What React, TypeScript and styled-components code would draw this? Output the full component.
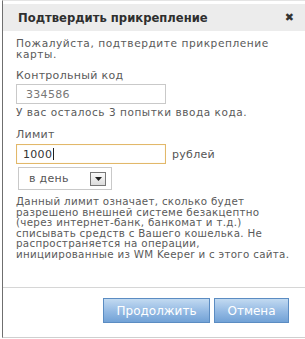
import React from "react";
import styled, { createGlobalStyle } from "styled-components";

const Global = createGlobalStyle`
  html, body { margin: 0; padding: 0; background: #fff; }
  body { font-family: "DejaVu Sans", Verdana, sans-serif; }
`;

const Dialog = styled.div`
  box-sizing: border-box;
  width: 303px;
  height: 338px;
  margin-left: 2px;
  border-left: 1px solid #6f6f6f;
  border-top: 1px solid #e4e4e4;
  border-bottom: 1px solid #cfcfcf;
  display: flex;
  flex-direction: column;
`;

const Header = styled.div`
  margin-top: 3px;
  height: 27px;
  flex-shrink: 0;
  background: #ececec;
  display: flex;
  align-items: center;
  justify-content: space-between;
  padding: 0 11px 0 15px;
`;

const Title = styled.div`
  font-size: 11.6px;
  font-weight: bold;
  color: #2f2f2f;
`;

const Close = styled.span`
  font-size: 11px;
  font-weight: bold;
  color: #333;
`;

const Body = styled.div`
  padding: 7px 10px 0 13px;
  color: #5a5a5a;
  flex: 1;
`;

const Para = styled.p<{ $top?: number; $size?: number; $lh?: number; $ls?: number }>`
  margin: ${(p) => p.$top ?? 0}px 0 0 0;
  font-size: ${(p) => p.$size ?? 10.6}px;
  line-height: ${(p) => p.$lh ?? 11}px;
  letter-spacing: ${(p) => p.$ls ?? 0.55}px;
`;

const Label = styled.div<{ $top: number }>`
  margin-top: ${(p) => p.$top}px;
  font-size: 11px;
  letter-spacing: 0.3px;
  line-height: 12px;
`;

const Row = styled.div<{ $top: number }>`
  margin-top: ${(p) => p.$top}px;
  display: flex;
  align-items: center;
  gap: 6px;
`;

const Input = styled.div<{ $focus?: boolean }>`
  box-sizing: border-box;
  width: 150px;
  height: 20px;
  border: 1px solid ${(p) => (p.$focus ? "#e2b86a" : "#c9c9c9")};
  box-shadow: ${(p) => (p.$focus ? "inset 0 0 1px #f0d9a8" : "none")};
  background: #fff;
  display: flex;
  align-items: center;
  padding-left: ${(p) => (p.$focus ? 6 : 9)}px;
  font-size: 11px;
  letter-spacing: 0.3px;
  color: ${(p) => (p.$focus ? "#333" : "#777")};
`;

const Caret = styled.span`
  display: inline-block;
  width: 1px;
  height: 12px;
  background: #222;
  margin-left: 1px;
`;

const Unit = styled.span`
  font-size: 11px;
  letter-spacing: 0.3px;
  color: #555;
`;

const Select = styled.div`
  box-sizing: border-box;
  margin: 3px 0 0 2px;
  width: 94px;
  height: 23px;
  border: 1px solid #c9c9c9;
  display: flex;
  align-items: center;
  justify-content: space-between;
  padding: 0 5px 0 10px;
  font-size: 11px;
  letter-spacing: 0.3px;
  color: #555;
`;

const Arrow = styled.span`
  box-sizing: border-box;
  width: 16px;
  height: 14px;
  border: 1px solid #777;
  background: linear-gradient(#fafafa, #dcdcdc);
  display: flex;
  align-items: center;
  justify-content: center;
`;

const Footer = styled.div`
  border-top: 1px solid #d6d6d6;
  flex-shrink: 0;
  display: flex;
  justify-content: flex-end;
  gap: 4px;
  padding: 10px 16px 14px 0;
`;

const Button = styled.button<{ $w: number }>`
  box-sizing: border-box;
  width: ${(p) => p.$w}px;
  height: 25px;
  border: 1px solid #5b8cc2;
  background: linear-gradient(#c2daf1, #93b9e3 55%, #72a2d6);
  color: #fff;
  font-family: "DejaVu Sans", Verdana, sans-serif;
  font-size: 12px;
  padding: 0;
`;

export default function App() {
  return (
    <>
      <Global />
      <Dialog>
        <Header>
          <Title>Подтвердить прикрепление</Title>
          <Close>✖</Close>
        </Header>
        <Body>
          <Para>
            Пожалуйста, подтвердите прикрепление
            <br />
            карты.
          </Para>
          <Label $top={10}>Контрольный код</Label>
          <Row $top={2}>
            <Input>334586</Input>
          </Row>
          <Para $top={3} $size={10.5} $ls={0.55}>
            У вас осталось 3 попытки ввода кода.
          </Para>
          <Label $top={11}>Лимит</Label>
          <Row $top={3}>
            <Input $focus>
              1000
              <Caret />
            </Input>
            <Unit>рублей</Unit>
          </Row>
          <Select>
            в день
            <Arrow>
              <svg width="7" height="4" viewBox="0 0 7 4">
                <path d="M0 0h7L3.5 4z" fill="#222" />
              </svg>
            </Arrow>
          </Select>
          <Para $top={6} $size={10.3} $lh={10.5} $ls={0.3}>
            Данный лимит означает, сколько будет
            <br />
            разрешено внешней системе безакцептно
            <br />
            (через интернет-банк, банкомат и т.д.)
            <br />
            списывать средств с Вашего кошелька. Не
            <br />
            распространяется на операции,
            <br />
            инициированные из WM Keeper и с этого сайта.
          </Para>
        </Body>
        <Footer>
          <Button $w={107}>Продолжить</Button>
          <Button $w={75}>Отмена</Button>
        </Footer>
      </Dialog>
    </>
  );
}
